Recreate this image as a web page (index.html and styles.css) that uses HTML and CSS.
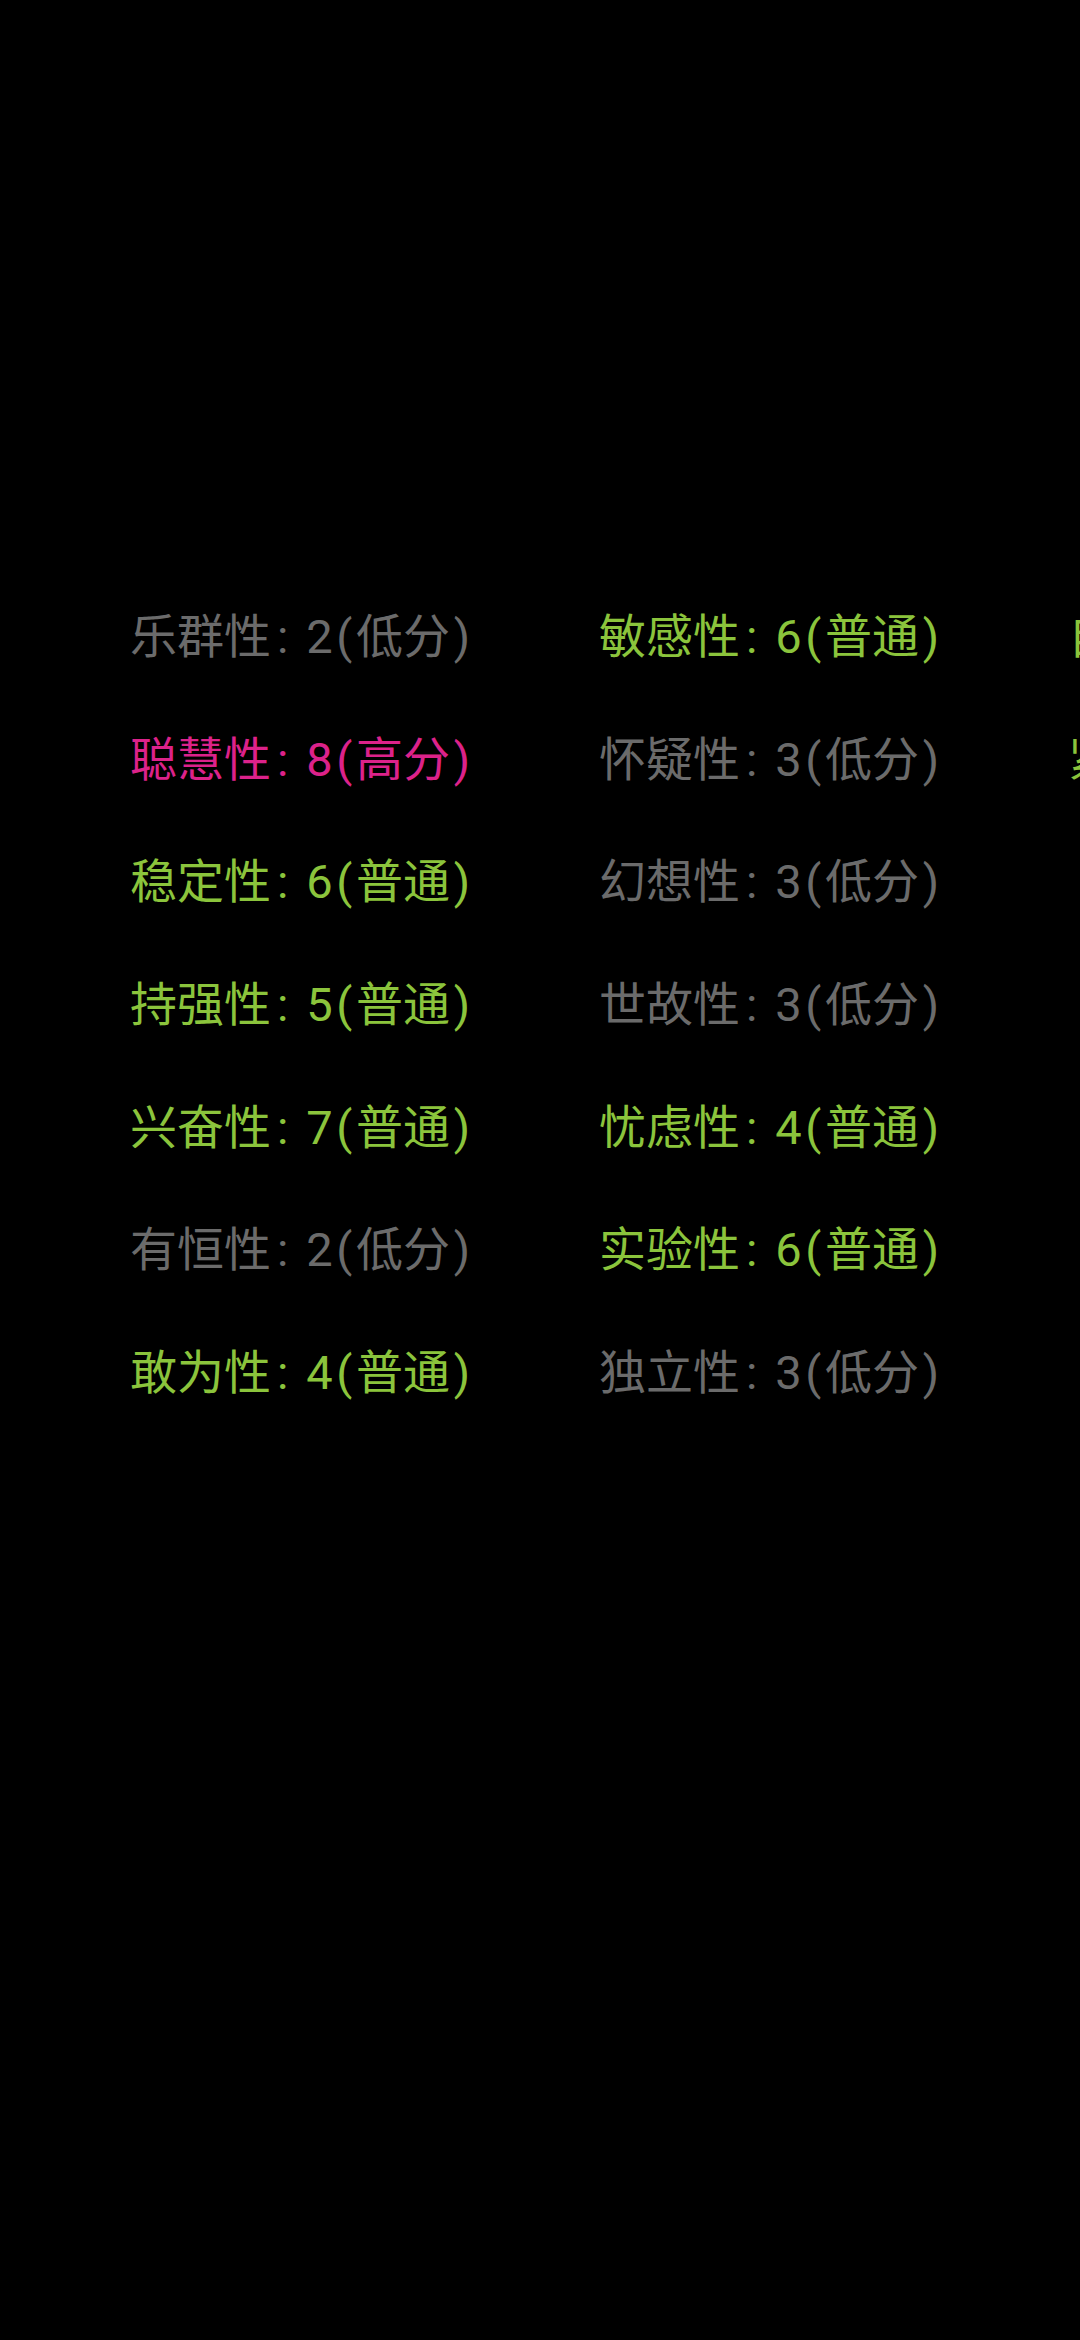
FILE: index.html
```html
<!DOCTYPE html>
<html lang="zh-CN">
<head>
<meta charset="utf-8">
<link rel="stylesheet" href="styles.css">
</head>
<body>
<div class="screen">
  <div class="grid">
    <div class="item low">乐群性<span class="hw">:</span> 2<span class="hw">(</span>低分<span class="hw">)</span></div>
    <div class="item high">聪慧性<span class="hw">:</span> 8<span class="hw">(</span>高分<span class="hw">)</span></div>
    <div class="item mid">稳定性<span class="hw">:</span> 6<span class="hw">(</span>普通<span class="hw">)</span></div>
    <div class="item mid">持强性<span class="hw">:</span> 5<span class="hw">(</span>普通<span class="hw">)</span></div>
    <div class="item mid">兴奋性<span class="hw">:</span> 7<span class="hw">(</span>普通<span class="hw">)</span></div>
    <div class="item low">有恒性<span class="hw">:</span> 2<span class="hw">(</span>低分<span class="hw">)</span></div>
    <div class="item mid">敢为性<span class="hw">:</span> 4<span class="hw">(</span>普通<span class="hw">)</span></div>
    <div class="item mid">敏感性<span class="hw">:</span> 6<span class="hw">(</span>普通<span class="hw">)</span></div>
    <div class="item low">怀疑性<span class="hw">:</span> 3<span class="hw">(</span>低分<span class="hw">)</span></div>
    <div class="item low">幻想性<span class="hw">:</span> 3<span class="hw">(</span>低分<span class="hw">)</span></div>
    <div class="item low">世故性<span class="hw">:</span> 3<span class="hw">(</span>低分<span class="hw">)</span></div>
    <div class="item mid">忧虑性<span class="hw">:</span> 4<span class="hw">(</span>普通<span class="hw">)</span></div>
    <div class="item mid">实验性<span class="hw">:</span> 6<span class="hw">(</span>普通<span class="hw">)</span></div>
    <div class="item low">独立性<span class="hw">:</span> 3<span class="hw">(</span>低分<span class="hw">)</span></div>
    <div class="item mid">自律性<span class="hw">:</span> 5<span class="hw">(</span>普通<span class="hw">)</span></div>
    <div class="item mid">紧张性<span class="hw">:</span> 6<span class="hw">(</span>普通<span class="hw">)</span></div>
  </div>
</div>
</body>
</html>
```
FILE: styles.css
```css
html, body {
  margin: 0;
  padding: 0;
  background: #000;
  overflow: hidden;
}
.screen {
  width: 1080px;
  height: 2340px;
  overflow: hidden;
  background: #000;
  padding-top: 576px;
  box-sizing: border-box;
}
.grid {
  display: grid;
  grid-auto-flow: column;
  grid-template-rows: repeat(7, 122.67px);
  grid-auto-columns: 469px;
  padding-left: 130px;
  width: max-content;
}
.item {
  font-family: Roboto, "Noto Sans CJK SC", sans-serif;
  font-size: 47px;
  line-height: 122.67px;
  white-space: pre;
}
.hw {
  display: inline-block;
  width: 0.5em;
  text-align: center;
}
.low { color: #6b6b6b; }
.mid { color: #8bc43c; }
.high { color: #dc228a; }
```
